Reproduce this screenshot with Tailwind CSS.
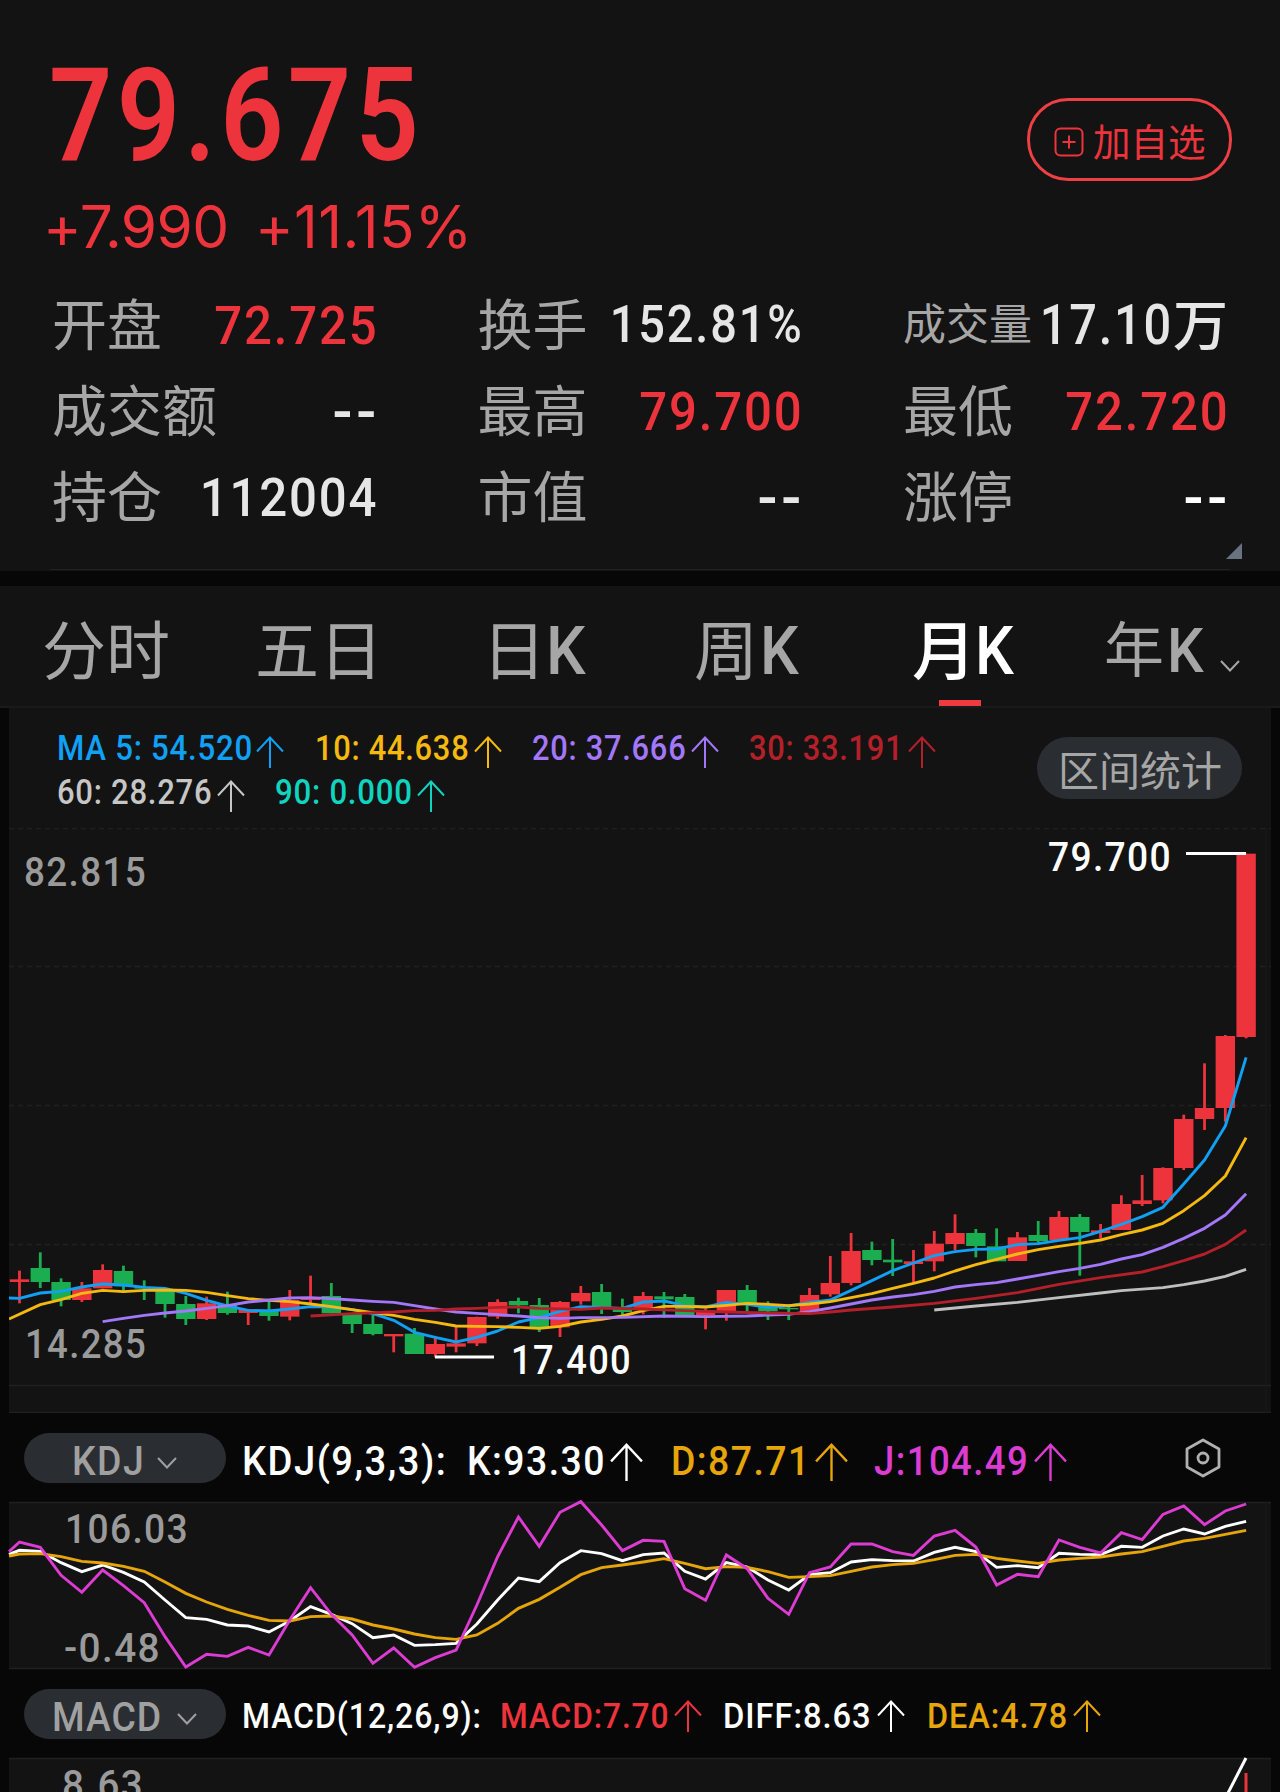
<!DOCTYPE html>
<html lang="zh-CN">
<head>
    <meta charset="UTF-8">
    <meta name="viewport" content="width=device-width, initial-scale=1.0">
    <title>行情 - 月K</title>
    <script src="https://cdn.jsdelivr.net/npm/@tailwindcss/browser@4"></script>
</head>
<body class="bg-[#070707]">
    <!-- Arrow and chevron shapes shared by the legends -->
    <svg class="hidden">
        <symbol id="up" viewBox="0 0 28 32"><path d="M14 32V1.5M1 15.5L14 1.5L27 15.5" fill="none" stroke="currentColor" stroke-width="2"/></symbol>
        <symbol id="down" viewBox="0 0 20 12"><path d="M1 1L10 10.5L19 1" fill="none" stroke="currentColor" stroke-width="2"/></symbol>
    </svg>

    <div class="w-[1280px] h-[1792px] overflow-hidden whitespace-nowrap font-['Roboto','Noto_Sans_CJK_SC',sans-serif] font-medium text-[#a6a6a6]">
        <!-- Quote header -->
        <header class="h-[571px] bg-[#131313] pt-[64px]">
            <div class="h-[198px] flex justify-between items-start pl-[49px] pr-[48px] text-[#ed333b]">
                <div>
                    <div class="h-[104px] leading-[104px] text-[129px] font-semibold tracking-[5px] origin-left scale-x-[.86]">79.675</div>
                    <div class="mt-[23px] h-[72px] leading-[72px] text-[58.5px] font-['Inter',sans-serif] font-normal tracking-[-.6px] flex">
                        <span class="w-[212px] -ml-[6px]">+7.990</span>
                        <span class="tracking-[.4px]">+11.15%</span>
                    </div>
                </div>
                <button class="mt-[34px] w-[205px] h-[83px] border-[3px] border-[#ed3f44] rounded-[41px] flex items-center pl-[24px]">
                    <svg class="w-[30px] h-[30px] mt-1" viewBox="0 0 30 30" fill="none" stroke="currentColor" stroke-width="2"><rect x="1.5" y="1.5" width="27" height="27" rx="5"/><path d="M8.5 15h13M15 8.5v13"/></svg>
                    <span class="ml-[9px] text-[37.5px] leading-[50px] font-normal font-['Noto_Sans_CJK_SC',sans-serif]">加自选</span>
                </button>
            </div>

            <div class="mt-[20px] pl-[52px] pr-[51px] grid grid-cols-[325px_325px_325px] gap-x-[100.5px] auto-rows-[86px] items-center text-[54px] text-[#e6e6e6]">
                <div class="flex justify-between items-center">
                    <span class="pb-2 text-[55px] leading-none text-[#a6a6a6] font-normal font-['Noto_Sans_CJK_SC',sans-serif]">开盘</span>
                    <span class="origin-right scale-x-[.91] tracking-[2px] -mr-[1px] text-[#ed333b]">72.725</span>
                </div>
                <div class="flex justify-between items-center">
                    <span class="pb-2 text-[55px] leading-none text-[#a6a6a6] font-normal font-['Noto_Sans_CJK_SC',sans-serif]">换手</span>
                    <span class="origin-right scale-x-[.92] tracking-[2px] -mr-[1px] text-[51px]">152.81%</span>
                </div>
                <div class="flex justify-between items-center">
                    <span class="pb-2 text-[43px] leading-none text-[#a6a6a6] font-normal font-['Noto_Sans_CJK_SC',sans-serif]">成交量</span>
                    <span class="flex items-center"><span class="-ml-[20px] origin-right scale-x-[.87] tracking-[2px] text-[56px]">17.10</span><span class="pb-2 text-[55px] leading-none font-medium font-['Noto_Sans_CJK_SC',sans-serif]">万</span></span>
                </div>
                <div class="flex justify-between items-center">
                    <span class="pb-2 text-[55px] leading-none text-[#a6a6a6] font-normal font-['Noto_Sans_CJK_SC',sans-serif]">成交额</span>
                    <span class="pt-[2px] text-[62px] leading-none tracking-[4px] -mr-[3px] origin-right scale-x-95">--</span>
                </div>
                <div class="flex justify-between items-center">
                    <span class="pb-2 text-[55px] leading-none text-[#a6a6a6] font-normal font-['Noto_Sans_CJK_SC',sans-serif]">最高</span>
                    <span class="origin-right scale-x-[.91] tracking-[2px] -mr-[1px] text-[#ed333b]">79.700</span>
                </div>
                <div class="flex justify-between items-center">
                    <span class="pb-2 text-[55px] leading-none text-[#a6a6a6] font-normal font-['Noto_Sans_CJK_SC',sans-serif]">最低</span>
                    <span class="origin-right scale-x-[.91] tracking-[2px] -mr-[1px] text-[#ed333b]">72.720</span>
                </div>
                <div class="flex justify-between items-center">
                    <span class="pb-2 text-[55px] leading-none text-[#a6a6a6] font-normal font-['Noto_Sans_CJK_SC',sans-serif]">持仓</span>
                    <span class="origin-right scale-x-[.91] tracking-[2px] -mr-[1px]">112004</span>
                </div>
                <div class="flex justify-between items-center">
                    <span class="pb-2 text-[55px] leading-none text-[#a6a6a6] font-normal font-['Noto_Sans_CJK_SC',sans-serif]">市值</span>
                    <span class="pt-[2px] text-[62px] leading-none tracking-[4px] -mr-[3px] origin-right scale-x-95">--</span>
                </div>
                <div class="flex justify-between items-center">
                    <span class="pb-2 text-[55px] leading-none text-[#a6a6a6] font-normal font-['Noto_Sans_CJK_SC',sans-serif]">涨停</span>
                    <span class="pt-[2px] text-[62px] leading-none tracking-[4px] -mr-[3px] origin-right scale-x-95 text-white">--</span>
                </div>
            </div>
            <div class="h-[29px] pt-[3px] pr-[38px] flex justify-end">
                <svg class="w-4 h-4" viewBox="0 0 16 16"><path d="M16 0V16H0Z" fill="#69727f"/></svg>
            </div>
            <div class="mx-[50px] h-px bg-[#222]"></div>
        </header>

        <!-- Period tabs -->
        <nav class="mt-[15px] h-[122px] bg-[#131313] border-b-2 border-[#1a1a1a] flex items-center pl-[42px] text-[64px] leading-[100px] font-normal font-['Noto_Sans_CJK_SC',sans-serif]">
            <a class="w-[213px]">分时</a>
            <a class="w-[227px]">五日</a>
            <a class="w-[212px] flex items-baseline">日<span class="font-['Roboto',sans-serif] font-medium leading-none text-[66px] origin-left scale-x-95">K</span></a>
            <a class="w-[218px] flex items-baseline">周<span class="font-['Roboto',sans-serif] font-medium leading-none text-[66px] ml-[2px] origin-left scale-x-[.93]">K</span></a>
            <a class="relative w-[192px] h-full pt-[10px] flex items-baseline text-white font-medium">月<span class="font-['Roboto',sans-serif] font-medium leading-none text-[66px] ml-[-1px] origin-left scale-x-[.93]">K</span>
                <span class="absolute left-[27px] bottom-0 w-[42px] h-[6px] bg-[#ed3b40]"></span>
            </a>
            <a class="text-[60px] flex items-baseline">年<span class="font-['Roboto',sans-serif] font-medium leading-none text-[61px] ml-[3px] origin-left scale-x-95">K</span>
                <svg class="w-5 h-3 ml-[14px] mb-[14px]"><use href="#down"/></svg>
            </a>
        </nav>

        <main class="mx-[9px]">
            <!-- Moving averages -->
            <div class="h-[120px] bg-[#131313] pt-[18px] pl-[48px] pr-[29px] flex justify-between">
                <div class="text-[34.5px] leading-[44px] tracking-[.8px]">
                    <div class="flex h-[44px]">
                        <span class="w-[258px] flex text-[#10a0f5]"><span class="w-[199px] origin-left scale-x-[.905]">MA 5: 54.520</span><svg class="w-7 h-8 mt-[10px]"><use href="#up"/></svg></span>
                        <span class="w-[217px] flex text-[#f5b90f]"><span class="w-[159px] origin-left scale-x-[.895]">10: 44.638</span><svg class="w-7 h-8 mt-[10px]"><use href="#up"/></svg></span>
                        <span class="w-[217px] flex text-[#a377fa]"><span class="w-[159px] origin-left scale-x-[.895]">20: 37.666</span><svg class="w-7 h-8 mt-[10px]"><use href="#up"/></svg></span>
                        <span class="flex text-[#b32029]"><span class="w-[159px] origin-left scale-x-[.895]">30: 33.191</span><svg class="w-7 h-8 mt-[10px]"><use href="#up"/></svg></span>
                    </div>
                    <div class="flex h-[44px]">
                        <span class="w-[218px] flex text-[#c6c6c6]"><span class="w-[160px] origin-left scale-x-[.9]">60: 28.276</span><svg class="w-7 h-8 mt-[10px]"><use href="#up"/></svg></span>
                        <span class="flex text-[#10d3c0]"><span class="w-[142px] origin-left scale-x-[.905]">90: 0.000</span><svg class="w-7 h-8 mt-[10px]"><use href="#up"/></svg></span>
                    </div>
                </div>
                <button class="mt-[11px] w-[205px] h-[62px] pl-[1px] rounded-full bg-[#2a2e32] text-[41px] leading-[54px] font-normal font-['Noto_Sans_CJK_SC',sans-serif]">区间统计</button>
            </div>

            <!-- Candles, y axis in page pixels -->
            <svg id="candles" class="block w-[1262px] h-[585px] bg-[#131313] text-[41.5px] tracking-[1.5px]" viewBox="9 828 1262 585">
                <g stroke="#202020" stroke-width="1.5">
                    <path d="M9 828.5H1271M9 966.5H1271M9 1105.5H1271M9 1244.5H1271" stroke-dasharray="5 4"/>
                    <path d="M9 1385.5H1271M9 1412.5H1271"/>
                    <path d="M1266 828V1413" stroke="#181818"/>
                </g>
                <g id="bars"></g>
                <g id="averages" fill="none" stroke-width="2.9" stroke-linejoin="round"></g>
                <path d="M1186 853.5H1246M435 1357H494" stroke="#fff" stroke-width="3"/>
                <g fill="#9a9a9a">
                    <text x="24" y="886" textLength="123" lengthAdjust="spacingAndGlyphs">82.815</text>
                    <text x="25" y="1358" textLength="122" lengthAdjust="spacingAndGlyphs">14.285</text>
                </g>
                <g fill="#fff">
                    <text x="1048" y="870.5" textLength="124" lengthAdjust="spacingAndGlyphs">79.700</text>
                    <text x="511" y="1374" textLength="121" lengthAdjust="spacingAndGlyphs">17.400</text>
                </g>
            </svg>

            <!-- KDJ -->
            <div class="h-[89px] flex items-center pl-[15px] text-[41.5px] leading-[50px] text-white tracking-[1.6px]">
                <button class="w-[202px] h-[50px] mt-[1px] rounded-full bg-[#2a2e32] text-[#a0a0a0] flex items-center justify-center gap-[8px]"><span class="-ml-[5px] pt-[5px] scale-x-90">KDJ</span><svg class="w-5 h-3 mt-[10px]"><use href="#down"/></svg></button>
                <span class="ml-[16px] mt-[7px] w-[225px]"><span class="inline-block origin-left scale-x-[.92]">KDJ(9,3,3):</span></span>
                <span class="w-[204px] mt-[7px] flex"><span class="w-[142px] origin-left scale-x-[.9]">K:93.30</span><svg class="w-[35px] h-[38px] mt-[7px]"><use href="#up"/></svg></span>
                <span class="w-[203px] mt-[7px] flex text-[#e6a50a]"><span class="w-[143px] origin-left scale-x-[.9]">D:87.71</span><svg class="w-[35px] h-[38px] mt-[7px]"><use href="#up"/></svg></span>
                <span class="w-[311px] mt-[7px] flex text-[#dc3cd2]"><span class="w-[159px] origin-left scale-x-[.88]">J:104.49</span><svg class="w-[35px] h-[38px] mt-[7px]"><use href="#up"/></svg></span>
                <svg class="w-9 h-[40px] text-[#b0b0b0]" viewBox="0 0 36 40" fill="none" stroke="currentColor" stroke-width="2.8" stroke-linejoin="round"><path d="M18 2L34 11V29L18 38L2 29V11Z"/><circle cx="18" cy="20" r="5"/></svg>
            </div>
            <svg id="kdj" class="block overflow-visible w-[1262px] h-[167px] bg-[#131313] text-[41.5px] tracking-[1.5px]" viewBox="9 1502 1262 167">
                <path d="M9 1502.5H1271M9 1668.5H1271" stroke="#202020" stroke-width="1.5"/>
                <path d="M1266 1502V1669" stroke="#181818" stroke-width="1.5"/>
                <g fill="#9a9a9a">
                    <text x="65" y="1543" textLength="124" lengthAdjust="spacingAndGlyphs">106.03</text>
                    <text x="64" y="1662" textLength="97" lengthAdjust="spacingAndGlyphs">-0.48</text>
                </g>
                <g id="kdjLines" fill="none" stroke-width="2.9" stroke-linejoin="miter"></g>
            </svg>

            <!-- MACD -->
            <div class="h-[89px] flex items-center pl-[15px] text-[35px] leading-[50px] text-white tracking-[1px]">
                <button class="w-[202px] h-[50px] mt-[1px] rounded-full bg-[#2a2e32] text-[#a0a0a0] text-[41.5px] flex items-center justify-center gap-[8px]"><span class="-ml-[7px] pt-[5px] scale-x-90">MACD</span><svg class="w-5 h-3 mt-[10px]"><use href="#down"/></svg></button>
                <span class="ml-[16px] mt-[7px] w-[258px]"><span class="inline-block origin-left scale-x-[.915]">MACD(12,26,9):</span></span>
                <span class="w-[223px] mt-[7px] flex text-[#ed333b]"><span class="w-[174px] origin-left scale-x-[.905]">MACD:7.70</span><svg class="w-7 h-8 mt-[8px]"><use href="#up"/></svg></span>
                <span class="w-[204px] mt-[7px] flex"><span class="w-[154px] origin-left scale-x-[.935]">DIFF:8.63</span><svg class="w-7 h-8 mt-[8px]"><use href="#up"/></svg></span>
                <span class="mt-[7px] flex text-[#e6a50a]"><span class="w-[146px] origin-left scale-x-[.925]">DEA:4.78</span><svg class="w-7 h-8 mt-[8px]"><use href="#up"/></svg></span>
            </div>
            <svg class="block w-[1262px] h-[34px] bg-[#131313] overflow-visible text-[41.5px] tracking-[1.5px]" viewBox="9 1758 1262 34">
                <path d="M9 1758.5H1271" stroke="#202020" stroke-width="1.5"/>
                <text x="62" y="1798.5" fill="#9a9a9a" textLength="82" lengthAdjust="spacingAndGlyphs">8.63</text>
                <path d="M1228 1793L1246 1758" stroke="#fff" stroke-width="3"/>
                <path d="M1246 1773V1792" stroke="#ed333b" stroke-width="3"/>
            </svg>
        </main>
    </div>

    <script>
        const STEP = 20.79, X0 = 19.5;
        const cx = i => X0 + i * STEP;

        // [up, high, bodyTop, bodyBottom, low] in thirds of a pixel below y = 1220
        const bars = [
            [1,152,178,186,250],[0,97,144,186,204],[0,175,186,240,259],[1,186,205,240,246],[1,133,150,205,205],
            [0,137,153,199,215],[0,181,201,206,240],[0,208,210,252,293],[0,228,252,297,315],[1,230,250,297,300],
            [0,215,255,279,284],[1,268,268,279,315],[0,240,269,288,302],[1,210,240,290,301],[1,167,232,240,250],
            [0,189,228,280,280],[0,280,280,312,339],[0,284,312,342,346],[1,342,342,349,397],[0,324,341,402,402],
            [1,352,372,402,412],[1,318,370,380,397],[1,290,291,370,378],[1,238,246,290,296],[0,233,243,256,280],
            [0,234,255,322,336],[1,243,246,322,351],[1,198,219,244,254],[0,192,216,262,282],[0,236,268,276,290],
            [1,216,228,268,283],[0,216,229,238,293],[0,222,231,288,288],[1,266,272,286,328],[1,210,210,277,302],
            [0,195,210,252,275],[0,244,256,274,300],[0,254,264,268,300],[1,204,225,277,277],[1,108,189,223,230],
            [1,39,93,189,196],[0,65,90,120,136],[0,57,119,127,168],[1,90,124,132,186],[1,33,71,124,154],
            [1,-17,39,72,90],[0,27,39,78,112],[0,25,79,124,124],[1,36,52,123,123],[0,3,45,63,68],
            [1,-27,-9,60,60],[0,-18,-9,36,167],[1,12,31,39,55],[1,-74,-48,30,30],[1,-135,-59,-48,-42],
            [1,-158,-156,-59,-50],[1,-316,-303,-156,-150],[1,-470,-336,-303,-270],[1,-555,-552,-336,-295],[1,-1099,-1099,-549,-545]
        ];
        document.getElementById('bars').innerHTML = bars.map(([up, h, t, b, l], i) => {
            const y = v => 1220 + v / 3;
            return `<g fill="${up ? '#ed333b' : '#1aae50'}"><rect x="${cx(i) - 1.4}" y="${y(h)}" width="2.8" height="${(l - h) / 3}"/><rect x="${cx(i) - 9.7}" y="${y(t)}" width="19.4" height="${(b - t) / 3}"/></g>`;
        }).join('');

        // i is the first candle of a series; edge is its value on the left border of the panel
        function line(base, s) {
            const pts = s.v.map((v, k) => v === null ? '' : `${cx(s.i + k)},${base + v / 3}`).filter(Boolean);
            if (s.edge) pts.unshift(`9,${base + s.edge / 3}`);
            return `<polyline stroke="${s.c}" points="${pts.join(' ')}"/>`;
        }
        const n = null;
        const averages = [
            { c: '#bfbfbf', i: 44, v: [270,n,258,n,247,n,233,n,219,212,n,203,194,183,169,148] },
            { c: '#10a0f5', i: 0, edge: 234, v: [235,219,214,201,192,195,202,205,220,241,258,271,273,267,260,261,269,281,301,337,352,366,352,333,306,293,274,260,262,265,246,243,257,261,247,253,262,258,247,240,211,182,152,129,107,95,88,87,74,71,61,53,34,13,-10,-38,-108,-180,-282,-488] },
            { c: '#f5b90f', i: 1, edge: 297, v: [254,239,220,211,215,211,210,211,217,227,236,241,245,252,260,269,278,286,298,307,318,319,320,322,325,319,306,298,288,272,259,259,261,256,250,253,257,252,245,233,221,205,190,174,153,134,118,102,89,79,70,60,44,30,10,-28,-73,-132,-247] },
            { c: '#a377fa', i: 4, v: [305,295,286,279,273,265,257,246,240,234,233,236,240,244,247,257,267,276,280,284,288,293,295,293,n,292,n,288,n,290,n,288,n,283,275,264,252,240,231,224,214,201,194,188,177,166,155,145,133,117,104,82,55,25,-15,-79] },
            { c: '#b32029', i: 14, v: [288,n,281,n,276,272,271,267,265,262,261,265,n,268,264,n,267,n,272,n,276,n,279,n,281,276,270,n,261,n,250,n,235,n,218,n,193,n,173,n,156,140,122,102,73,30] }
        ];
        document.getElementById('averages').innerHTML = averages.map(s => line(1220, s)).join('');

        const kdj = [
            { c: '#ffffff', i: 0, edge: 463, v: [451,454,488,515,495,517,546,600,653,658,675,678,696,663,620,643,671,713,705,736,734,730,672,600,534,545,488,452,461,482,464,459,514,537,488,501,540,570,524,518,486,479,482,483,457,442,455,502,497,503,460,463,464,439,442,408,387,402,379,364] },
            { c: '#e6a50a', i: 0, edge: 468, v: [462,461,470,484,489,499,514,546,580,606,628,646,661,663,650,648,657,675,687,702,713,718,705,670,625,598,562,524,503,495,486,476,490,506,500,502,515,532,530,527,514,501,494,490,479,466,463,475,483,490,480,475,471,462,455,439,423,415,403,391] },
            { c: '#dc3cd2', i: 0, edge: 455, v: [426,442,526,577,510,557,608,710,801,763,769,742,765,660,563,643,705,790,744,802,773,750,615,470,351,439,337,305,375,452,421,424,566,601,465,506,595,643,518,501,432,432,455,466,408,391,441,555,523,530,420,442,459,398,419,343,318,374,333,312] }
        ];
        document.getElementById('kdjLines').innerHTML = kdj.map(s => line(1400, s)).join('');
    </script>
</body>
</html>
